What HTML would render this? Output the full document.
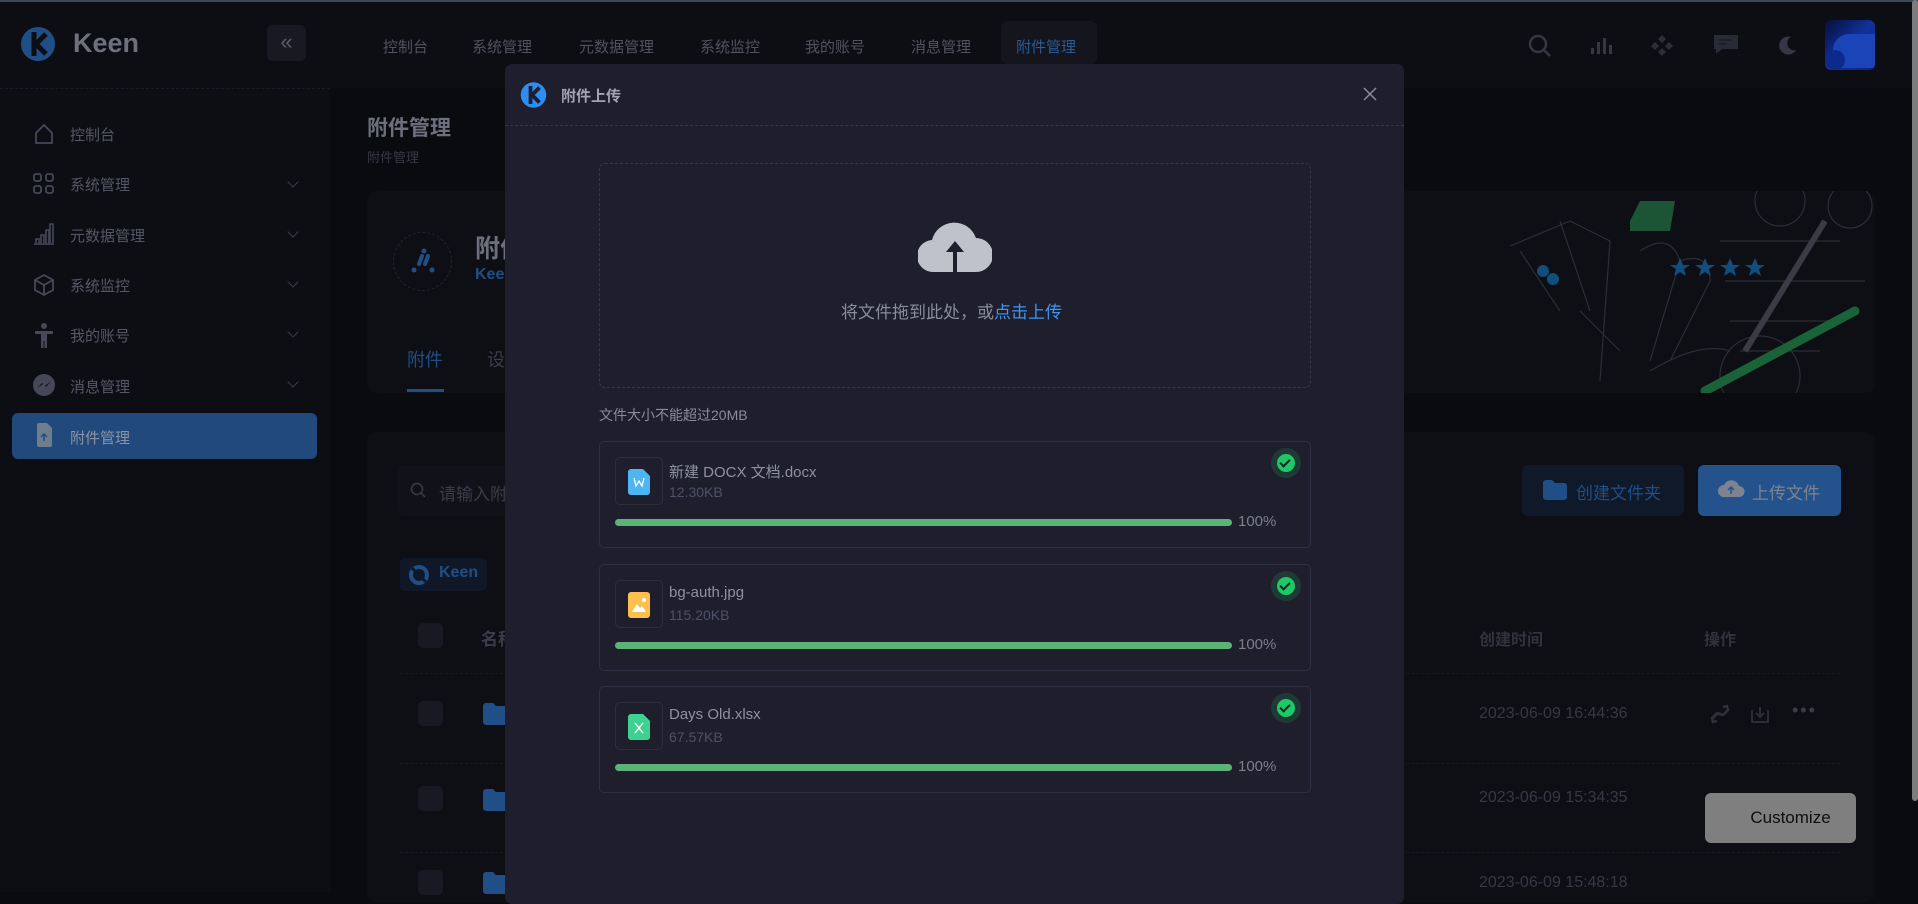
<!DOCTYPE html>
<html><head><meta charset="utf-8">
<style>
*{box-sizing:border-box;margin:0;padding:0}
body{width:1918px;height:892px;overflow:hidden;background:#0a0b0f;font-family:"Liberation Sans","Noto Sans CJK SC",sans-serif;position:relative;color:#8a8c99}
.abs{position:absolute}
.topline{left:0;top:0;width:1918px;height:2px;background:#3b4a52}
.header{left:0;top:2px;width:1918px;height:86px;background:#0d0e13}
.side{left:0;top:88px;width:330px;height:804px;background:#0d0e13;border-top:1px dashed #1a1b22}
.nav{top:36px;font-size:15px;color:#50525f}
.mi{left:70px;font-size:15px;color:#555766}
.chev{left:289px;width:8px;height:8px;border-right:1.5px solid #3c3e4e;border-bottom:1.5px solid #3c3e4e;transform:rotate(45deg)}
.card{background:#0e0f15;border-radius:10px}
.modal{left:505px;top:64px;width:899px;height:840px;background:#1e1e2d;border-radius:7px}
.item{left:599px;width:712px;height:107px;border:1px solid #2e2f42;border-radius:5px}
.ibox{left:15px;top:15px;width:48px;height:48px;border:1px solid #2c2d3e;border-radius:5px}
.fname{left:69px;top:19px;font-size:15px;color:#8f91a0}
.fsize{left:69px;top:42px;font-size:14px;color:#4f5166}
.bar{left:15px;top:77px;width:617px;height:7px;border-radius:4px;background:#5cb377}
.pct{left:638px;top:71px;font-size:15px;color:#7d7f8e}
.chk{left:671px;top:6px;width:30px;height:30px;border-radius:50%;background:#1f3a35}
.chk::after{content:"";position:absolute;left:6px;top:6px;width:18px;height:18px;border-radius:50%;background:#1fc866}
.chk span{position:absolute;left:11px;top:9px;width:6px;height:10px;border-right:2px solid #12241c;border-bottom:2px solid #12241c;transform:rotate(45deg);z-index:2}
.date{left:1479px;font-size:16px;color:#363846}
.fold{left:483px;width:26px;height:22px}
</style></head><body>
<div class="abs topline"></div>
<div class="abs header"></div>
<svg class="abs" style="left:20px;top:26px" width="40" height="36" viewBox="0 0 40 36"><circle cx="18" cy="18" r="17" fill="#1f4f86"/><path d="M14 6v24M26 8l-10 10 10 10" stroke="#0d0e13" stroke-width="5" fill="none"/></svg>
<div class="abs" style="left:73px;top:28px;font-size:27px;font-weight:bold;color:#6e707c">Keen</div>
<div class="abs" style="left:267px;top:25px;width:39px;height:36px;border-radius:6px;background:#181922;color:#5a5c6c;font-size:22px;text-align:center;line-height:34px">«</div>
<div class="abs nav" style="left:383px">控制台</div>
<div class="abs nav" style="left:472px">系统管理</div>
<div class="abs nav" style="left:579px">元数据管理</div>
<div class="abs nav" style="left:700px">系统监控</div>
<div class="abs nav" style="left:805px">我的账号</div>
<div class="abs nav" style="left:911px">消息管理</div>
<div class="abs" style="left:1001px;top:21px;width:96px;height:43px;background:#14151d;border-radius:6px"></div>
<div class="abs nav" style="left:1016px;color:#2a5c96">附件管理</div>
<svg class="abs" style="left:1526px;top:32px" width="28" height="28"><circle cx="12" cy="12" r="8" stroke="#353744" stroke-width="2.5" fill="none"/><path d="M18 18l6 6" stroke="#353744" stroke-width="2.5"/></svg>
<svg class="abs" style="left:1590px;top:36px" width="24" height="20"><rect x="1" y="12" width="3" height="6" fill="#353744"/><rect x="7" y="6" width="3" height="12" fill="#353744"/><rect x="13" y="2" width="3" height="16" fill="#353744"/><rect x="19" y="9" width="3" height="9" fill="#353744"/></svg>
<svg class="abs" style="left:1650px;top:33px" width="24" height="24"><path d="M12 2l4 4-4 4-4-4zM5 9l4 4-4 4-4-4zM19 9l4 4-4 4-4-4zM12 15l4 4-4 4-4-4z" fill="#2c2e39"/></svg>
<svg class="abs" style="left:1713px;top:34px" width="26" height="22"><path d="M1 1h24v14H9l-6 5V15H1z" fill="#282a35"/><path d="M6 6h12M6 10h8" stroke="#1b1c24" stroke-width="1.5"/></svg>
<svg class="abs" style="left:1776px;top:34px" width="22" height="22"><path d="M15 3a9 9 0 1 0 5 13 7 7 0 0 1-5-13z" fill="#353744"/></svg>
<div class="abs" style="left:1825px;top:20px;width:50px;height:50px;border-radius:6px;background:linear-gradient(135deg,#05103a,#12309a 50%,#0a2680);overflow:hidden"><div style="position:absolute;left:8px;top:14px;width:46px;height:34px;background:#1a44b8;border-radius:16px 0 0 0"></div><div style="position:absolute;left:0;top:30px;width:20px;height:20px;background:#0c2a8c;border-radius:50%"></div></div>
<div class="abs side"></div>
<svg class="abs" style="left:32px;top:122px" width="24" height="24"><path d="M4 11L12 3l8 8v10H4z" stroke="#464858" stroke-width="1.8" fill="none"/></svg>
<div class="abs mi" style="top:124px">控制台</div>
<svg class="abs" style="left:33px;top:173px" width="22" height="22" fill="none" stroke="#464858" stroke-width="1.8"><rect x="1" y="1" width="7" height="7" rx="2"/><rect x="13" y="1" width="7" height="7" rx="2"/><rect x="1" y="13" width="7" height="7" rx="2"/><rect x="13" y="13" width="7" height="7" rx="2"/></svg>
<div class="abs mi" style="top:174px">系统管理</div><div class="abs chev" style="top:178px"></div>
<svg class="abs" style="left:33px;top:223px" width="22" height="22" fill="none" stroke="#464858" stroke-width="1.6"><path d="M1 21h20M3 20v-4h3v4M8 20v-8h3v8M13 20V7h3v13M17 20V1h3v19"/></svg>
<div class="abs mi" style="top:225px">元数据管理</div><div class="abs chev" style="top:228px"></div>
<svg class="abs" style="left:32px;top:273px" width="24" height="24" fill="none" stroke="#464858" stroke-width="1.8"><path d="M12 2l9 5v10l-9 5-9-5V7zM3 7l9 5 9-5M12 12v10"/></svg>
<div class="abs mi" style="top:275px">系统监控</div><div class="abs chev" style="top:278px"></div>
<svg class="abs" style="left:34px;top:323px" width="20" height="26" fill="#464858"><circle cx="10" cy="3" r="3"/><path d="M1 8h18v3h-6v14h-2.5v-7h-1v7H7V11H1z"/></svg>
<div class="abs mi" style="top:325px">我的账号</div><div class="abs chev" style="top:328px"></div>
<svg class="abs" style="left:32px;top:373px" width="24" height="24"><circle cx="12" cy="12" r="11" fill="#464858"/><path d="M5 15l5-5 3 3 6-5-5 6-3-3z" fill="#0d0e13"/></svg>
<div class="abs mi" style="top:376px">消息管理</div><div class="abs chev" style="top:378px"></div>
<div class="abs" style="left:12px;top:413px;width:305px;height:46px;background:#21497c;border-radius:6px"></div>
<svg class="abs" style="left:36px;top:423px" width="16" height="24"><path d="M1 2a2 2 0 0 1 2-2h8l5 5v17a2 2 0 0 1-2 2H3a2 2 0 0 1-2-2z" fill="#6f7d8e"/><path d="M8 18V11M5 14l3-3 3 3" stroke="#21497c" stroke-width="1.4" fill="none"/></svg>
<div class="abs mi" style="top:427px;color:#8a93a3">附件管理</div>
<div class="abs" style="left:367px;top:112px;font-size:21px;font-weight:bold;color:#6d6f7c">附件管理</div>
<div class="abs" style="left:367px;top:147px;font-size:13px;color:#373946">附件管理</div>
<div class="abs card" style="left:367px;top:191px;width:1508px;height:202px"></div>
<div class="abs" style="left:393px;top:232px;width:59px;height:59px;border-radius:50%;border:1px dashed #22242e"></div>
<svg class="abs" style="left:408px;top:248px" width="30" height="26"><g fill="#1f4f86"><circle cx="16" cy="3" r="2.5"/><path d="M14 8l-3 8" stroke="#1f4f86" stroke-width="4" stroke-linecap="round"/><path d="M20 8l-3 8" stroke="#1f4f86" stroke-width="4" stroke-linecap="round"/><circle cx="6" cy="22" r="2.5"/><circle cx="24" cy="22" r="2.5"/></g></svg>
<div class="abs" style="left:475px;top:229px;font-size:25px;font-weight:bold;color:#6d6f7c">附件</div>
<div class="abs" style="left:475px;top:266px;font-size:16px;font-weight:bold;color:#1f4f86">Keen</div>
<div class="abs" style="left:407px;top:346px;font-size:18px;color:#1f4f86">附件</div>
<div class="abs" style="left:407px;top:389px;width:37px;height:3px;background:#1f4f86"></div>
<div class="abs" style="left:487px;top:346px;font-size:18px;color:#3a3c4a">设置</div>
<svg class="abs" style="left:1500px;top:191px" width="375" height="202" fill="none" stroke="#2c2d35" stroke-width="1.2">
<path d="M10 55l60-25 40 20M20 60l40 60M60 30l30 90M80 120l40 40M110 50l-10 140M140 60q30-20 40 10l-30 100M180 70q30-10 30 20l-40 80M150 180q50-30 80-20"/>
<path d="M220 50h120M225 90h140M230 130h100M240 160h80"/>
<circle cx="280" cy="10" r="25"/><circle cx="350" cy="15" r="22"/><circle cx="260" cy="185" r="40"/>
<path d="M130 30l10-20h35l-5 30h-40z" fill="#1b5535" stroke="none"/>
<path d="M245 160l80-130" stroke="#3a3b44" stroke-width="6"/>
<path d="M205 200l150-80" stroke="#1a6238" stroke-width="9" stroke-linecap="round"/>
<g fill="#114e7e" stroke="none"><path d="M180 67l3 7 7 0-6 4 2 7-6-4-6 4 2-7-6-4 7 0z"/><path d="M205 67l3 7 7 0-6 4 2 7-6-4-6 4 2-7-6-4 7 0z"/><path d="M230 67l3 7 7 0-6 4 2 7-6-4-6 4 2-7-6-4 7 0z"/><path d="M255 67l3 7 7 0-6 4 2 7-6-4-6 4 2-7-6-4 7 0z"/><circle cx="43" cy="80" r="6"/><circle cx="53" cy="88" r="6"/></g>
</svg>
<div class="abs card" style="left:367px;top:432px;width:1508px;height:470px"></div>
<div class="abs" style="left:398px;top:465px;width:120px;height:51px;background:#111219;border-radius:6px"></div>
<svg class="abs" style="left:410px;top:482px" width="16" height="18"><circle cx="7" cy="7" r="5.5" stroke="#3a3c4a" stroke-width="1.5" fill="none"/><path d="M11 11l4 4" stroke="#3a3c4a" stroke-width="1.5"/></svg>
<div class="abs" style="left:439px;top:480px;font-size:17px;color:#3a3c4a">请输入附</div>
<div class="abs" style="left:400px;top:558px;width:87px;height:33px;background:#101828;border-radius:5px"></div>
<svg class="abs" style="left:408px;top:564px" width="22" height="22"><circle cx="11" cy="11" r="8" stroke="#1f4f86" stroke-width="4" fill="none"/><path d="M4 4l14 14" stroke="#101828" stroke-width="3"/></svg>
<div class="abs" style="left:439px;top:564px;font-size:16px;font-weight:bold;color:#1f4f86">Keen</div>
<div class="abs" style="left:418px;top:623px;width:25px;height:25px;border-radius:5px;background:#181922"></div>
<div class="abs" style="left:481px;top:625px;font-size:17px;font-weight:bold;color:#3a3c4a">名称</div>
<div class="abs" style="left:1479px;top:626px;font-size:16px;font-weight:bold;color:#30323c">创建时间</div>
<div class="abs" style="left:1704px;top:626px;font-size:16px;font-weight:bold;color:#30323c">操作</div>
<div class="abs" style="left:400px;top:673px;width:1440px;border-top:1px dashed #181920"></div>
<div class="abs" style="left:400px;top:763px;width:1440px;border-top:1px dashed #181920"></div>
<div class="abs" style="left:400px;top:852px;width:1440px;border-top:1px dashed #181920"></div>
<div class="abs" style="left:418px;top:701px;width:25px;height:25px;border-radius:5px;background:#181922"></div>
<div class="abs" style="left:418px;top:786px;width:25px;height:25px;border-radius:5px;background:#181922"></div>
<div class="abs" style="left:418px;top:870px;width:25px;height:25px;border-radius:5px;background:#181922"></div>
<svg class="abs fold" style="top:703px"><path d="M0 3a3 3 0 0 1 3-3h7l3 3h10a3 3 0 0 1 3 3v13a3 3 0 0 1-3 3H3a3 3 0 0 1-3-3z" fill="#1f4f86"/></svg>
<svg class="abs fold" style="top:789px"><path d="M0 3a3 3 0 0 1 3-3h7l3 3h10a3 3 0 0 1 3 3v13a3 3 0 0 1-3 3H3a3 3 0 0 1-3-3z" fill="#1f4f86"/></svg>
<svg class="abs fold" style="top:872px"><path d="M0 3a3 3 0 0 1 3-3h7l3 3h10a3 3 0 0 1 3 3v13a3 3 0 0 1-3 3H3a3 3 0 0 1-3-3z" fill="#1f4f86"/></svg>
<div class="abs date" style="top:705px">2023-06-09 16:44:36</div>
<div class="abs date" style="top:789px">2023-06-09 15:34:35</div>
<div class="abs date" style="top:874px">2023-06-09 15:48:18</div>
<svg class="abs" style="left:1709px;top:704px" width="22" height="20"><path d="M3 15l6-6M8 17l-4 1-1-4 5-5 4 1M14 3l4-1 1 4-5 5-4-1" stroke="#2e303b" stroke-width="2.5" fill="none"/></svg>
<svg class="abs" style="left:1750px;top:704px" width="20" height="20"><path d="M2 6v12h16V6M10 3v10M6 9l4 4 4-4" stroke="#2e303b" stroke-width="1.8" fill="none"/></svg>
<div class="abs" style="left:1792px;top:700px;font-size:18px;color:#3a3c4a;letter-spacing:2px">•••</div>
<div class="abs" style="left:1522px;top:465px;width:162px;height:51px;background:#101929;border-radius:6px"></div>
<svg class="abs" style="left:1543px;top:480px" width="24" height="20"><path d="M0 3a3 3 0 0 1 3-3h6l3 3h9a3 3 0 0 1 3 3v11a3 3 0 0 1-3 3H3a3 3 0 0 1-3-3z" fill="#1f4f86"/></svg>
<div class="abs" style="left:1576px;top:479px;font-size:17px;color:#1f4f86">创建文件夹</div>
<div class="abs" style="left:1698px;top:465px;width:143px;height:51px;background:#24528c;border-radius:6px"></div>
<svg class="abs" style="left:1717px;top:477px" width="28" height="22"><path d="M7 20a6 6 0 0 1 0-12 8 8 0 0 1 15 1 5.5 5.5 0 0 1 0 11z" fill="#7d8490"/><path d="M14 17v-7M11 13l3-3 3 3" stroke="#24528c" stroke-width="1.5" fill="none"/></svg>
<div class="abs" style="left:1752px;top:479px;font-size:17px;color:#7d8490">上传文件</div>
<div class="abs" style="left:1705px;top:793px;width:151px;height:50px;background:#7f7f7f;border-radius:6px;font-size:17px;color:#0e0e0e;text-align:center;line-height:50px;padding-left:20px">Customize</div>
<div class="abs" style="left:1912px;top:0;width:6px;height:801px;background:#7c7c7c;border-radius:3px"></div>
<div class="abs modal"></div>
<svg class="abs" style="left:520px;top:80px" width="30" height="30" viewBox="0 0 40 36"><circle cx="18" cy="18" r="17" fill="#2f8df0"/><path d="M14 6v24M26 8l-10 10 10 10" stroke="#1e1e2d" stroke-width="5" fill="none"/></svg>
<div class="abs" style="left:561px;top:85px;font-size:15px;font-weight:bold;color:#a2a4b0">附件上传</div>
<svg class="abs" style="left:1363px;top:87px" width="14" height="14"><path d="M1 1l12 12M13 1L1 13" stroke="#8a8c99" stroke-width="1.5"/></svg>
<div class="abs" style="left:505px;top:125px;width:899px;border-top:1px dashed #34364a"></div>
<div class="abs" style="left:599px;top:163px;width:712px;height:225px;border:1px dashed #35374a;border-radius:6px"></div>
<svg class="abs" style="left:918px;top:216px" width="74" height="56" viewBox="0 0 74 56"><path d="M16 56A16 16 0 0 1 14 24 23 23 0 0 1 58 22 17 17 0 0 1 58 56z" fill="#c0c2cb"/><path d="M37 56V30" stroke="#1e1e2d" stroke-width="4"/><path d="M28 36l9-11 9 11z" fill="#1e1e2d"/></svg>
<div class="abs" style="left:841px;top:298px;font-size:17px;color:#8a8c99">将文件拖到此处，或<span style="color:#3b96f5">点击上传</span></div>
<div class="abs" style="left:599px;top:405px;font-size:14px;color:#8a8c99">文件大小不能超过20MB</div>
<div class="abs item" style="top:441px">
 <div class="abs ibox"><svg style="position:absolute;left:12px;top:11px" width="22" height="26"><path d="M0 3a3 3 0 0 1 3-3h12l7 7v16a3 3 0 0 1-3 3H3a3 3 0 0 1-3-3z" fill="#4eb5f5"/><path d="M6 9l2 8 3-5 3 5 2-8" stroke="#fff" stroke-width="1.3" fill="none"/></svg></div>
 <div class="abs fname">新建 DOCX 文档.docx</div><div class="abs fsize">12.30KB</div>
 <div class="abs bar"></div><div class="abs pct">100%</div><div class="abs chk"><span></span></div>
</div>
<div class="abs item" style="top:564px">
 <div class="abs ibox"><svg style="position:absolute;left:12px;top:11px" width="22" height="26"><path d="M0 3a3 3 0 0 1 3-3h16a3 3 0 0 1 3 3v20a3 3 0 0 1-3 3H3a3 3 0 0 1-3-3z" fill="#fcc04f"/><path d="M4 20l5-8 3 4 2-2 4 6z" fill="#fff"/><circle cx="16" cy="8" r="2" fill="#fff"/></svg></div>
 <div class="abs fname">bg-auth.jpg</div><div class="abs fsize">115.20KB</div>
 <div class="abs bar"></div><div class="abs pct">100%</div><div class="abs chk"><span></span></div>
</div>
<div class="abs item" style="top:686px">
 <div class="abs ibox"><svg style="position:absolute;left:12px;top:11px" width="22" height="26"><path d="M0 3a3 3 0 0 1 3-3h12l7 7v16a3 3 0 0 1-3 3H3a3 3 0 0 1-3-3z" fill="#3fd18f"/><path d="M7 9l8 10M15 9l-8 10" stroke="#fff" stroke-width="1.4"/></svg></div>
 <div class="abs fname">Days Old.xlsx</div><div class="abs fsize">67.57KB</div>
 <div class="abs bar"></div><div class="abs pct">100%</div><div class="abs chk"><span></span></div>
</div>
</body></html>
